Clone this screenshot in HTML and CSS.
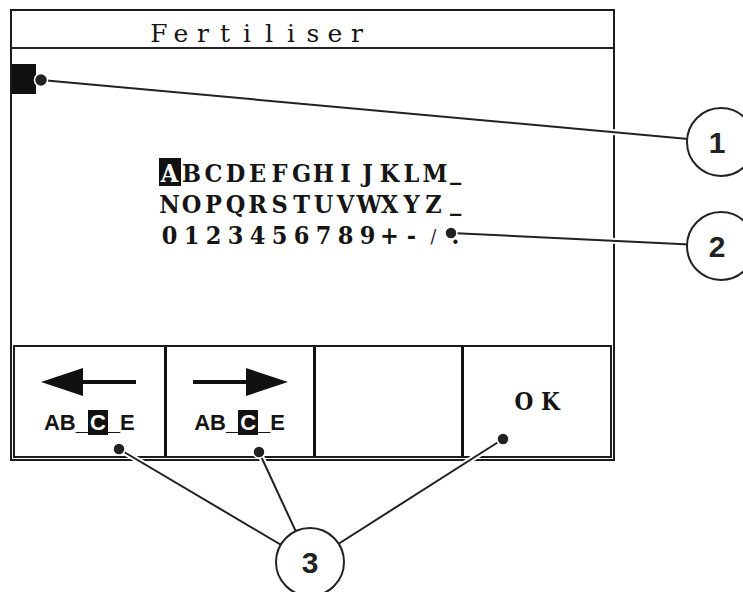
FILE: index.html
```html
<!DOCTYPE html>
<html lang="en">
<head>
  <meta charset="UTF-8">
  <title>Fertiliser name entry</title>
  <link rel="stylesheet" href="styles.css">
</head>
<body>

<div class="page">
  <div class="screen">
    <div class="title">
      <span class="cell">F</span><span class="cell">e</span><span class="cell">r</span><span class="cell">t</span><span class="cell">i</span><span class="cell">l</span><span class="cell">i</span><span class="cell">s</span><span class="cell">e</span><span class="cell">r</span>
    </div>

    <div class="content">
      <div class="cursor"></div>

      <div class="charset">
        <div class="row">
          <span class="ch sel">A</span><span class="ch">B</span><span class="ch">C</span><span class="ch">D</span><span class="ch">E</span><span class="ch">F</span><span class="ch">G</span><span class="ch">H</span><span class="ch">I</span><span class="ch">J</span><span class="ch">K</span><span class="ch">L</span><span class="ch">M</span><span class="ch us">_</span>
        </div>
        <div class="row">
          <span class="ch">N</span><span class="ch">O</span><span class="ch">P</span><span class="ch">Q</span><span class="ch">R</span><span class="ch">S</span><span class="ch">T</span><span class="ch">U</span><span class="ch">V</span><span class="ch">W</span><span class="ch">X</span><span class="ch">Y</span><span class="ch">Z</span><span class="ch us">_</span>
        </div>
        <div class="row">
          <span class="ch">0</span><span class="ch">1</span><span class="ch">2</span><span class="ch">3</span><span class="ch">4</span><span class="ch">5</span><span class="ch">6</span><span class="ch">7</span><span class="ch">8</span><span class="ch">9</span><span class="ch">+</span><span class="ch">-</span><span class="ch slash">/</span><span class="ch">.</span>
        </div>
      </div>
    </div>

    <div class="keys">
      <div class="key">
        <svg class="arrow" width="96" height="28" viewBox="0 0 96 28">
          <polygon points="0,14 42,0 42,28"/>
          <rect x="40" y="12" width="55" height="4"/>
        </svg>
        <div class="hint">AB_<span class="inv">C</span>_E</div>
      </div>
      <div class="key">
        <svg class="arrow" width="96" height="28" viewBox="0 0 96 28">
          <rect x="1" y="12" width="55" height="4"/>
          <polygon points="96,14 54,0 54,28"/>
        </svg>
        <div class="hint">AB_<span class="inv">C</span>_E</div>
      </div>
      <div class="key"></div>
      <div class="key key-ok">O K</div>
    </div>
  </div>

  <!-- callouts -->
  <svg class="callouts" width="743" height="592" viewBox="0 0 743 592">
    <g class="halo">
      <line x1="41" y1="80" x2="721" y2="142"/>
      <line x1="451" y1="233" x2="721" y2="246"/>
      <line x1="119" y1="449" x2="310" y2="562"/>
      <line x1="259" y1="452" x2="310" y2="562"/>
      <line x1="503" y1="439" x2="310" y2="562"/>
    </g>
    <g class="lead">
      <line x1="41" y1="80" x2="721" y2="142"/>
      <line x1="451" y1="233" x2="721" y2="246"/>
      <line x1="119" y1="449" x2="310" y2="562"/>
      <line x1="259" y1="452" x2="310" y2="562"/>
      <line x1="503" y1="439" x2="310" y2="562"/>
    </g>
    <g class="dot">
      <circle cx="41" cy="80" r="6.5"/>
      <circle cx="451" cy="233" r="6"/>
      <circle cx="119" cy="449" r="6"/>
      <circle cx="259" cy="452" r="6"/>
      <circle cx="503" cy="439" r="6"/>
    </g>
    <g class="badge">
      <circle cx="721" cy="142" r="34"/>
      <circle cx="721" cy="246" r="34"/>
      <circle cx="310" cy="562" r="34"/>
    </g>
    <g class="num">
      <text x="717" y="153">1</text>
      <text x="717" y="257">2</text>
      <text x="310" y="573">3</text>
    </g>
  </svg>
</div>

</body>
</html>
```

FILE: styles.css
```css
body {
  margin: 0;
  background: #fff;
  color: #151515;
}

.page {
  position: relative;
  width: 743px;
  height: 592px;
  padding: 9px 0 0 10px;
  box-sizing: border-box;
  overflow: hidden;
}

.screen {
  width: 605px;
  border: 2px solid #1c1c1c;
  box-sizing: border-box;
}

.title {
  display: flex;
  height: 38px;
  padding: 9px 0 0 136px;
  box-sizing: border-box;
  border-bottom: 2px solid #222;
  font-family: "DejaVu Serif", serif;
  font-size: 25px;
  line-height: 28px;
}

.title .cell {
  width: 22px;
  text-align: center;
}

.content {
  height: 296px;
  padding-top: 15px;
  box-sizing: border-box;
}

.cursor {
  width: 24px;
  height: 30px;
  background: #111;
}

.charset {
  display: flex;
  flex-direction: column;
  align-items: center;
  gap: 3px;
  margin-top: 64px;
  font-family: "DejaVu Serif", serif;
  font-stretch: condensed;
  font-weight: bold;
  font-size: 25px;
}

.row {
  display: flex;
}

.ch {
  width: 22px;
  height: 28px;
  line-height: 32px;
  text-align: center;
}

.ch.us {
  line-height: 25px;
}

.ch.slash {
  font-size: 19px;
  font-weight: normal;
}

.ch.sel {
  background: #111;
  color: #fff;
}

.keys {
  display: grid;
  grid-template-columns: repeat(4, 1fr);
  height: 113px;
  margin: 0 1px 1px;
  border: 2px solid #1c1c1c;
  box-sizing: border-box;
}

.key {
  display: flex;
  flex-direction: column;
  align-items: center;
  padding-top: 21px;
}

.key + .key {
  border-left: 3px solid #111;
}

.arrow {
  fill: #111;
}

.hint {
  margin-top: 15px;
  font-family: "Liberation Sans", sans-serif;
  font-weight: bold;
  font-size: 22px;
  line-height: 23px;
}

.hint .inv {
  background: #111;
  color: #fff;
  padding: 0 2px;
}

.key-ok {
  justify-content: center;
  padding-top: 0;
  font-family: "DejaVu Serif", serif;
  font-stretch: condensed;
  font-weight: bold;
  font-size: 24px;
  white-space: pre;
}

.callouts {
  position: absolute;
  left: 0;
  top: 0;
  pointer-events: none;
}

.halo line {
  stroke: #fff;
  stroke-width: 6;
}

.lead line {
  stroke: #222;
  stroke-width: 2;
}

.dot circle {
  fill: #222;
  stroke: #fff;
  stroke-width: 1.5;
}

.badge circle {
  fill: #fff;
  stroke: #222;
  stroke-width: 2;
}

.num text {
  font-family: "Liberation Sans", Arial, sans-serif;
  font-weight: bold;
  font-size: 30px;
  fill: #222;
  text-anchor: middle;
}
```
